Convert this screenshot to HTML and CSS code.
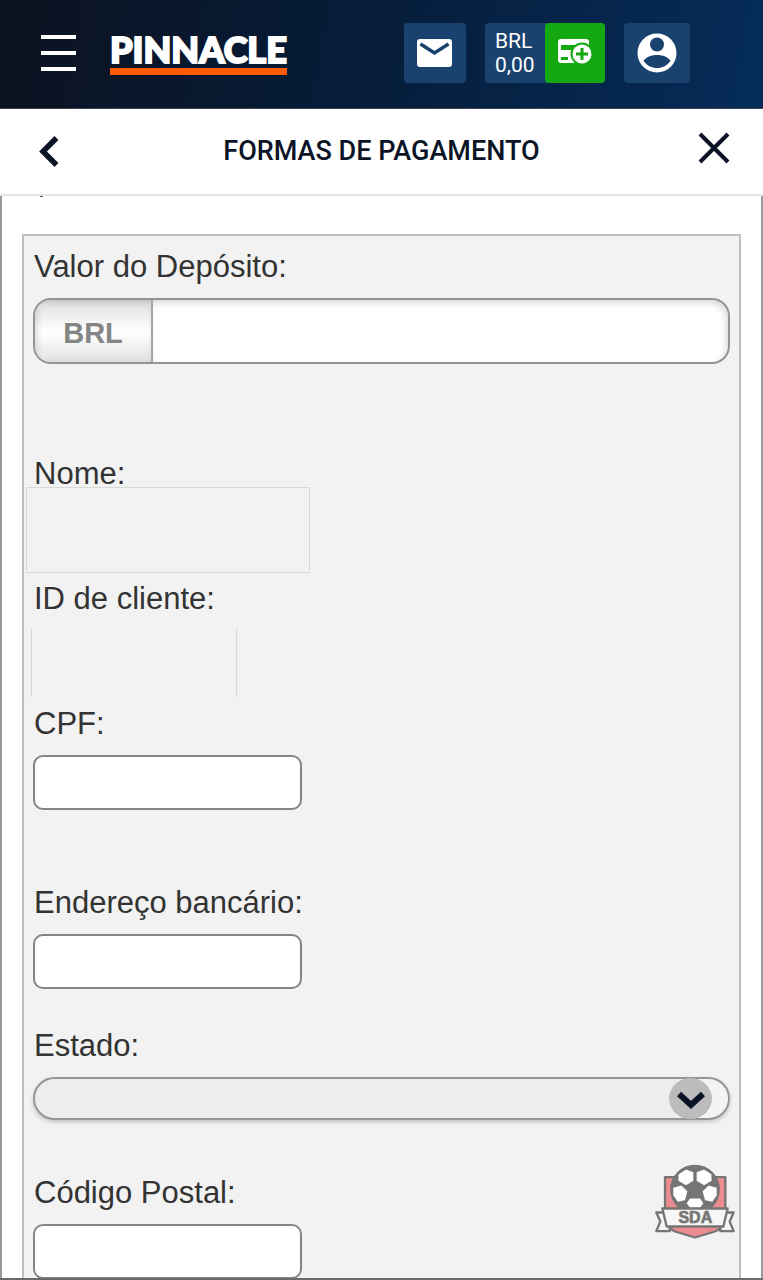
FILE: index.html
```html
<!DOCTYPE html>
<html lang="pt-BR">
<head>
  <meta charset="UTF-8">
  <meta name="viewport" content="width=device-width, initial-scale=1.0">
  <title>Formas de pagamento</title>
  <link rel="stylesheet" href="styles.css">
</head>
<body>
  <header class="top-bar">
    <button class="menu-button" type="button" aria-label="Menu">
      <span></span>
      <span></span>
      <span></span>
    </button>
    <a class="logo" href="#">PINNACLE</a>

    <div class="actions">
      <button class="action mail" type="button" aria-label="Mensagens">
        <svg width="36" height="28" viewBox="0 0 36 28">
          <rect x="0" y="0" width="35" height="28" rx="3" fill="#fff"/>
          <path d="M3.500 5l14 9L31.500 5" fill="none" stroke="#1a426f" stroke-width="3.500"/>
        </svg>
      </button>
      <div class="wallet">
        <div class="balance">BRL<br>0,00</div>
        <button class="deposit" type="button" aria-label="Depositar">
          <svg width="36" height="28" viewBox="0 0 36 28">
            <path d="M4 0h25a3 3 0 0 1 3 3v21H4a3 3 0 0 1-3-3V3a3 3 0 0 1 3-3z" fill="#fff"/>
            <path d="M4 6h28v5H4zM4 18h7v3H4z" fill="#13a810"/>
            <circle cx="25" cy="15" r="11.500" fill="#13a810"/>
            <circle cx="25" cy="15" r="9.500" fill="#fff"/>
            <path d="M25 9v12M19 15h12" stroke="#13a810" stroke-width="3"/>
          </svg>
        </button>
      </div>
      <button class="action user" type="button" aria-label="Conta">
        <svg width="40" height="40" viewBox="0 0 40 40">
          <circle cx="20" cy="20" r="19.500" fill="#fff"/>
          <circle cx="20" cy="11.500" r="7" fill="#1a426f"/>
          <path d="M6.500 28C9 24 14 22 20 22s11 2 13.500 6C30 32.500 25.500 35 20 35S10 32.500 6.500 28z" fill="#1a426f"/>
        </svg>
      </button>
    </div>
  </header>

  <div class="title-bar">
    <button class="icon-button" type="button" aria-label="Voltar">
      <svg width="20" height="32" viewBox="0 0 20 32">
        <path d="M17.500 3L4 16.500 17.500 30" fill="none" stroke="#0b1426" stroke-width="5.500"/>
      </svg>
    </button>
    <h1>FORMAS DE PAGAMENTO</h1>
    <button class="icon-button close" type="button" aria-label="Fechar">
      <svg width="32" height="32" viewBox="0 0 32 32">
        <path d="M2 2l28 28M30 2L2 30" fill="none" stroke="#0b1426" stroke-width="4"/>
      </svg>
    </button>
  </div>

  <main class="content">
    <span class="scrolled-text"></span>
    <form class="panel">
      <div class="field amount">
        <label for="amount">Valor do Depósito:</label>
        <div class="amount-box">
          <span class="currency">BRL</span>
          <input id="amount" type="text" inputmode="decimal">
        </div>
      </div>

      <div class="field name">
        <label for="name">Nome:</label>
        <output id="name" class="hidden-name"></output>
      </div>

      <div class="field client">
        <label for="client">ID de cliente:</label>
        <output id="client" class="hidden-id"></output>
      </div>

      <div class="field cpf">
        <label for="cpf">CPF:</label>
        <input id="cpf" class="text-input" type="text">
      </div>

      <div class="field address">
        <label for="address">Endereço bancário:</label>
        <input id="address" class="text-input" type="text">
      </div>

      <div class="field state">
        <label for="state">Estado:</label>
        <div class="select-box">
          <select id="state">
            <option value=""></option>
          </select>
          <span class="select-arrow">
            <svg width="28" height="18" viewBox="0 0 28 18">
              <path d="M2 3l12 11L26 3" fill="none" stroke="#0b1426" stroke-width="6"/>
            </svg>
          </span>
        </div>
      </div>

      <div class="field">
        <label for="zip">Código Postal:</label>
        <input id="zip" class="text-input" type="text">
      </div>
    </form>
  </main>

  <!-- Club badge -->
  <svg class="badge" width="80" height="77" viewBox="165 310 240 230">
    <path d="M195 352H376V480Q376 502 345 515L285 533L225 515Q195 502 195 480z" fill="#ec8c90" stroke="#757575" stroke-width="7" stroke-linejoin="round"/>
    <circle cx="285" cy="389" r="72" fill="#757575" stroke="#757575" stroke-width="5"/>
    <g fill="#fff">
      <path d="M236 343l22-14 22 8v26l-22 13-23-13z"/>
      <path d="M334 343l-22-14-22 8v26l22 13 23-13z"/>
      <path d="M220 384l24-7 18 17-7 27-22 5-13-20z"/>
      <path d="M350 384l-24-7-18 17 7 27 22 5 13-20z"/>
      <path d="M270 416h30l10 14-10 14h-30l-10-14z"/>
    </g>
    <path d="M190 458h-21l12 27-12 29h40v-14M380 458h21l-12 27 12 29h-40v-14" fill="#f6f6f6" stroke="#757575" stroke-width="7" stroke-linejoin="round"/>
    <path d="M187 446H383L370 500H200z" fill="#f6f6f6" stroke="#757575" stroke-width="7" stroke-linejoin="round"/>
    <text x="286" y="490" text-anchor="middle" class="badge-text">SDA</text>
  </svg>
</body>
</html>
```

FILE: styles.css
```css
/* GENERAL STYLING */
* {
  box-sizing: border-box;
}

body {
  position: relative;
  display: flex;
  flex-direction: column;
  height: 100vh;
  margin: 0;
  background-color: #fff;
  border-bottom: 2px solid #6a6a6a;
  font-family: "Liberation Sans", Arial, sans-serif;
  color: #333;
  overflow: hidden;
}

button {
  padding: 0;
  border: none;
  background: none;
  cursor: pointer;
}

svg {
  display: block;
}

/* Top bar */
.top-bar {
  display: flex;
  flex-shrink: 0;
  align-items: center;
  padding: 23px 73px 25px 41px;
  background: linear-gradient(100deg, #0c1220, #061c38 45%, #052c59);
  border-bottom: 1px solid #3c4656;
}

.menu-button {
  display: flex;
  flex-direction: column;
  gap: 12px;
  width: 35px;
}

.menu-button span {
  height: 4px;
  background-color: #fff;
}

.logo {
  margin-left: 34px;
  border-bottom: 7px solid #ff5a00;
  font-family: Lato, sans-serif;
  font-size: 36px;
  font-weight: 900;
  line-height: 37px;
  color: #fff;
  text-decoration: none;
  -webkit-text-stroke: 2px #fff;
}

.actions {
  display: flex;
  gap: 19px;
  margin-left: auto;
}

.action,
.deposit {
  display: flex;
  align-items: center;
  justify-content: center;
  height: 60px;
  border-radius: 4px;
}

.action {
  background-color: #1a426f;
}

.mail {
  width: 62px;
}

.user {
  width: 66px;
}

.wallet {
  display: flex;
  background-color: #1a426f;
  border-radius: 4px;
}

.balance {
  width: 60px;
  padding: 6px 0 0 10px;
  font-family: Roboto, sans-serif;
  font-size: 21px;
  line-height: 24px;
  color: #fff;
}

.deposit {
  width: 60px;
  background-color: #13a810;
}

/* Title bar */
.title-bar {
  display: flex;
  flex-shrink: 0;
  align-items: center;
  justify-content: space-between;
  height: 87px;
  padding: 0 33px 2px 39px;
  border-bottom: 2px solid #e6e6e6;
}

.title-bar h1 {
  flex: 1;
  margin: 0 6px 0 0;
  font-family: Roboto, sans-serif;
  font-size: 27px;
  font-weight: 500;
  text-align: center;
  color: #0b1426;
}

.icon-button {
  display: flex;
  width: 32px;
}

.close {
  justify-content: flex-end;
  padding-bottom: 5px;
}

/* Payment form */
.content {
  position: relative;
  flex: 1;
  min-height: 0;
  padding: 38px 20px 0;
  border: solid #999;
  border-width: 0 2px;
  overflow-y: auto;
  scrollbar-width: none;
}

.scrolled-text {
  position: absolute;
  top: 0;
  left: 38px;
  width: 3px;
  height: 1px;
  background-color: #555;
}

.panel {
  padding: 12px 9px 20px;
  background-color: #f2f2f2;
  border: 2px solid #bfbfbf;
}

.field {
  display: flex;
  flex-direction: column;
  align-items: flex-start;
  gap: 12px;
}

.field label {
  padding-left: 1px;
  font-size: 31px;
  line-height: 38px;
}

.amount {
  margin-bottom: 91px;
}

.amount-box {
  display: flex;
  align-self: stretch;
  height: 66px;
  background-color: #fff;
  border: 2px solid #949494;
  border-radius: 18px;
  overflow: hidden;
}

.currency {
  display: flex;
  align-items: center;
  justify-content: center;
  width: 118px;
  padding-top: 4px;
  background: linear-gradient(#dededc, #fff 50%, #f8f8f8 65%, #e2e2e0);
  border-right: 2px solid #a6a6a6;
  box-shadow: inset 2px 2px 6px rgba(0, 0, 0, 0.15);
  font-size: 29px;
  font-weight: bold;
  color: #858585;
}

.amount-box input {
  flex: 1;
  min-width: 0;
  border: none;
  border-radius: 0 16px 16px 0;
  background: none;
  box-shadow: inset -2px 3px 6px rgba(0, 0, 0, 0.15);
  font-size: 29px;
}

.name {
  gap: 0;
  margin-bottom: 7px;
}

.hidden-name {
  width: 284px;
  height: 86px;
  margin: -6px 0 0 -7px;
  border: 1px solid #d8d8d8;
}

.client {
  gap: 10px;
  margin-bottom: 8px;
}

.hidden-id {
  width: 206px;
  height: 69px;
  margin-left: -2px;
  border: solid #d8d8d8;
  border-width: 0 1px;
}

.text-input {
  width: 269px;
  height: 55px;
  border: 2px solid #858585;
  border-radius: 10px;
  background-color: #fff;
  font-size: 29px;
}

.cpf {
  margin-bottom: 74px;
}

.address {
  margin-bottom: 38px;
}

.state {
  margin-bottom: 54px;
}

.select-box {
  position: relative;
  align-self: stretch;
  height: 43px;
}

.select-box select {
  width: 100%;
  height: 100%;
  padding: 0 60px 0 20px;
  appearance: none;
  background: linear-gradient(90deg, #ededed 94%, #f4f4f4 94%);
  border: 2px solid #959595;
  border-radius: 22px;
  box-shadow: 0 2px 4px rgba(0, 0, 0, 0.2);
  font-size: 24px;
}

/* Arrow over the native select */
.select-arrow {
  position: absolute;
  top: 1px;
  right: 18px;
  display: flex;
  align-items: center;
  justify-content: center;
  width: 43px;
  height: 41px;
  padding-top: 2px;
  background-color: #bcbcbc;
  border-radius: 50%;
  pointer-events: none;
}

/* Badge */
.badge {
  position: absolute;
  right: 28px;
  bottom: 38px;
}

.badge-text {
  fill: #757575;
  stroke: #757575;
  stroke-width: 2px;
  font-size: 48px;
  font-weight: bold;
}
```
